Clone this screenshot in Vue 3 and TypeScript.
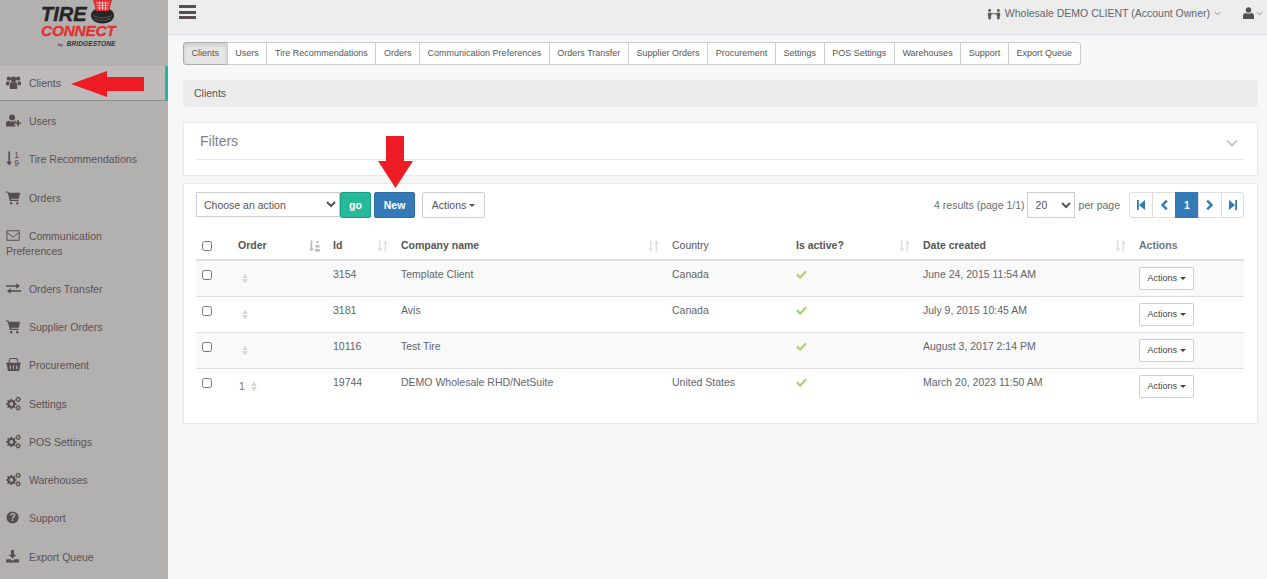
<template>
  <div class="layout">
    <aside class="sidebar">
      <div class="logo">
        <div class="logo-top">
          <span class="logo-tire">TIRE</span>
          <svg class="logo-mark" viewBox="0 0 26 26">
            <ellipse cx="12.500" cy="15.500" rx="11.500" ry="8" fill="#262626" />
            <path d="M4 18.500q8.500 4 17 0M3 15.500q9.500 5 19 0" stroke="#6a6a6a" stroke-width=".7" fill="none" />
            <path d="M3 0h19l-3 11H6z" fill="#dd3236" />
            <path d="M6 3h13M6.500 5.500h12M7 8h11M9.500 1.500V10M12.500 1.500V10M15.500 1.500V10" stroke="#f3d6d6" stroke-width=".8" fill="none" />
          </svg>
        </div>
        <div class="logo-connect">CONNECT</div>
        <div class="logo-by"><small>by</small> BRIDGESTONE</div>
      </div>
      <nav class="side-nav">
        <a v-for="item in sideItems" :key="item.label" class="side-item" :class="{ active: item.label === 'Clients' }">
          <svg class="side-icon" viewBox="0 0 16 16">
            <template v-if="item.icon === 'sort'">
              <path d="M2.500 .5h1.800v11H6.500L3.400 15.500.3 11.500h2.200z" />
              <text x="8.800" y="7" class="tiny">1</text>
              <text x="8.800" y="15.500" class="tiny">9</text>
            </template>
            <template v-else-if="item.icon === 'question'">
              <circle cx="7" cy="8" r="6.500" />
              <text x="7" y="12" class="qmark">?</text>
            </template>
            <path v-else :d="icons[item.icon]" fill-rule="evenodd" />
          </svg>
          {{ item.label }}
        </a>
      </nav>
    </aside>

    <div class="main">
      <header class="topbar">
        <div class="burger"><i></i><i></i><i></i></div>
        <div class="account">
          <svg class="acct-icon" viewBox="0 0 16 12">
            <circle cx="3" cy="2" r="1.600" /><circle cx="13" cy="2" r="1.600" />
            <path d="M1 4.500h4v4H4.500V12h-3V8.500H1zM11 4.500h4v4h-.5V12h-3V8.500H11zM5 5h6v1.200H5z" />
          </svg>
          <span>Wholesale DEMO CLIENT (Account Owner)</span>
          <svg class="chev" viewBox="0 0 8 5"><path d="M.8.8 4 4 7.200.8" /></svg>
        </div>
        <div class="user-menu">
          <svg class="user-icon" viewBox="0 0 12 13">
            <circle cx="6" cy="3.300" r="3" />
            <path d="M0 13v-3q0-3 3-3.500 3 1.500 6 0 3 .5 3 3.500v3z" />
          </svg>
          <svg class="chev" viewBox="0 0 8 5"><path d="M.8.8 4 4 7.200.8" /></svg>
        </div>
      </header>

      <div class="content">
        <div class="tabs">
          <a v-for="tab in tabs" :key="tab" class="tab" :class="{ active: tab === 'Clients' }">{{ tab }}</a>
        </div>

        <div class="crumb">Clients</div>

        <section class="panel filters">
          <div class="filters-head">
            <h2>Filters</h2>
            <svg class="filters-chev" viewBox="0 0 12 8"><path d="M1 1.500 6 6.500l5-5" /></svg>
          </div>
        </section>

        <section class="panel list">
          <div class="toolbar">
            <select class="sel action-sel"><option>Choose an action</option></select>
            <button class="btn go" type="button">go</button>
            <button class="btn new" type="button">New</button>
            <button class="btn plain" type="button">Actions <b class="caret"></b></button>
            <div class="pager-wrap">
              <span>4 results (page 1/1)</span>
              <select class="sel page-sel"><option>20</option></select>
              <span class="per">per page</span>
              <div class="pager">
                <a v-for="p in pager" :key="p.key" :class="{ current: p.key === 'one' }">
                  <template v-if="p.key === 'one'">1</template>
                  <svg v-else viewBox="0 0 10 12"><path :d="p.d" /></svg>
                </a>
              </div>
            </div>
          </div>

          <table class="grid">
            <colgroup>
              <col v-for="w in colWidths" :key="w" :style="{ width: w + 'px' }" />
            </colgroup>
            <thead>
              <tr>
                <th><input type="checkbox" /></th>
                <th v-for="h in headers" :key="h" :class="{ thin: h === 'Country' }">
                  <div class="th-in">
                    {{ h }}
                    <svg v-if="h === 'Order'" class="sort on" viewBox="0 0 11 12">
                      <path d="M1.500 .5h1.800v8H5L2.400 11.500-.2 8.500h1.700zM6 9h5v2.500H6zM6.500 5h4v2.500h-4zM7.500 1h2v2.500h-2z" />
                    </svg>
                    <svg v-else-if="h !== 'Country'" class="sort" viewBox="0 0 11 12">
                      <path d="M2 .5h1.600v8H5.300L2.800 11.500.3 8.500H2zM7.600 11.500h1.600v-8h1.700L8.400.5 5.900 3.500h1.700z" />
                    </svg>
                  </div>
                </th>
                <th>Actions</th>
              </tr>
            </thead>
            <tbody>
              <tr v-for="row in rows" :key="row.id">
                <td><input type="checkbox" /></td>
                <td>
                  <div class="order">
                    <span v-if="row.order">{{ row.order }}</span>
                    <svg class="handle" viewBox="0 0 6 12"><path d="M3 .5 6 5.500H0zM3 11.500 0 6.500h6z" /></svg>
                  </div>
                </td>
                <td>{{ row.id }}</td>
                <td>{{ row.company }}</td>
                <td>{{ row.country }}</td>
                <td>
                  <svg class="tick" viewBox="0 0 12 10"><path d="M0 5.800 1.700 4l2.800 2.700L10.300.5 12 2.300 4.500 10z" /></svg>
                </td>
                <td>{{ row.created }}</td>
                <td><button class="btn plain small" type="button">Actions <b class="caret"></b></button></td>
              </tr>
            </tbody>
          </table>
        </section>
      </div>
    </div>

    <svg class="arrow arrow-left" viewBox="0 0 73 26"><path d="M0 13 36 0v6h37v14H36v6z" /></svg>
    <svg class="arrow arrow-down" viewBox="0 0 35 52"><path d="M8 0h18v25h9L17.500 52 0 25h8z" /></svg>
  </div>
</template>

<script setup lang="ts">
// gear outline with a hole, teeth are just alternating radii
function gear(cx: number, cy: number, r: number, hole: number, teeth = 8): string {
  const pts: string[] = []
  const step = (Math.PI * 2) / (teeth * 4)
  for (let i = 0; i < teeth * 4; i++) {
    const rad = i % 4 < 2 ? r : r * 0.74
    const a = i * step - step / 2
    pts.push(`${(cx + rad * Math.cos(a)).toFixed(2)} ${(cy + rad * Math.sin(a)).toFixed(2)}`)
  }
  const ring = `M${cx - hole} ${cy}a${hole} ${hole} 0 1 0 ${hole * 2} 0a${hole} ${hole} 0 1 0 ${-hole * 2} 0z`
  return `M${pts.join('L')}z${ring}`
}

const cogs = gear(5.7, 8.5, 5.7, 2) + gear(13, 3.6, 3, 1.2, 6) + gear(13, 12.6, 3, 1.2, 6)
const cart = 'M0 1.500h2.600l.5 1.500H15l-1.300 6.200H5l.3 1.300h8.200v1.300H4L2 2.800H0zM5.500 12.800a1.300 1.300 0 1 1 0 2.600 1.300 1.300 0 0 1 0-2.600zM12 12.800a1.300 1.300 0 1 1 0 2.600 1.300 1.300 0 0 1 0-2.600z'

const icons: Record<string, string> = {
  users: 'M8 1.500a3 3 0 1 1 0 6 3 3 0 0 1 0-6zM3 1.500a2.300 2.300 0 1 1 0 4.600 2.300 2.300 0 0 1 0-4.600zM13 1.500a2.300 2.300 0 1 1 0 4.600 2.300 2.300 0 0 1 0-4.600zM4 15v-4.500q0-3 2.200-3 1.800 1 3.600 0 2.200 0 2.200 3V15zM0 11V8.800q0-2.200 1.700-2.200 1.300.8 2.800.4-1.500 1-1.500 4zM16 11V8.800q0-2.200-1.700-2.200-1.300.8-2.800.4 1.500 1 1.500 4z',
  userPlus: 'M6.500 1.500a3.200 3.200 0 1 1 0 6.400 3.200 3.200 0 0 1 0-6.400zM0 14.500V11.500Q0 8.500 3 8.300q3.500 2 7 0 1 0 1.800.7H10v2h-1v2h1v1.500zM12 7.500h1.800v2.500h2.200v1.700h-2.200v2.300H12v-2.300H9.900V10H12z',
  cart,
  envelope: 'M.5 2.500h14v11H.5zM1.500 3.500v1l6 4.700 6-4.700v-1zM13.500 5.700l-6 4.800-6-4.800v6.800h12z',
  exchange: 'M0 4.500h11V2.300L15 5.300l-4 3V6H0zM16 9.800H5V7.700L1 10.700l4 3v-2.300h11z',
  basket: 'M0 6h16v1.500h-.8L14 15H2L.8 7.500H0zM4 9v4h1.200V9zM7.400 9v4h1.200V9zM10.800 9v4H12V9zM2.500 6l1-4q.3-1 1.300-1h6.400q1 0 1.300 1l1 4h-1.200l-1-3.800H4.700L3.700 6z',
  cogs,
  download: 'M5.500 1h3v5h2.600L7 10 2.900 6h2.600zM0 11h4.800L7 12.800 9.200 11H14v3.500H0z',
}

type SideItem = { label: string; icon: string }

const sideItems: SideItem[] = [
  { label: 'Clients', icon: 'users' },
  { label: 'Users', icon: 'userPlus' },
  { label: 'Tire Recommendations', icon: 'sort' },
  { label: 'Orders', icon: 'cart' },
  { label: 'Communication Preferences', icon: 'envelope' },
  { label: 'Orders Transfer', icon: 'exchange' },
  { label: 'Supplier Orders', icon: 'cart' },
  { label: 'Procurement', icon: 'basket' },
  { label: 'Settings', icon: 'cogs' },
  { label: 'POS Settings', icon: 'cogs' },
  { label: 'Warehouses', icon: 'cogs' },
  { label: 'Support', icon: 'question' },
  { label: 'Export Queue', icon: 'download' },
]

const tabs = [
  'Clients', 'Users', 'Tire Recommendations', 'Orders', 'Communication Preferences',
  'Orders Transfer', 'Supplier Orders', 'Procurement', 'Settings', 'POS Settings',
  'Warehouses', 'Support', 'Export Queue',
]

const pager = [
  { key: 'first', d: 'M1 1h1.800v10H1zM9 1v10L3 6z' },
  { key: 'prev', d: 'M7 .8 8.700 2.500 5.200 6l3.500 3.500L7 11.200 1.800 6z' },
  { key: 'one', d: '' },
  { key: 'next', d: 'M3 .8 1.300 2.500 4.800 6 1.300 9.500 3 11.200 8.200 6z' },
  { key: 'last', d: 'M9 1H7.200v10H9zM1 1v10l6-5z' },
]

const colWidths = [34, 95, 68, 271, 124, 127, 216, 113]
const headers = ['Order', 'Id', 'Company name', 'Country', 'Is active?', 'Date created']

const rows = [
  { id: 3154, order: '', company: 'Template Client', country: 'Canada', created: 'June 24, 2015 11:54 AM' },
  { id: 3181, order: '', company: 'Avis', country: 'Canada', created: 'July 9, 2015 10:45 AM' },
  { id: 10116, order: '', company: 'Test Tire', country: '', created: 'August 3, 2017 2:14 PM' },
  { id: 19744, order: '1', company: 'DEMO Wholesale RHD/NetSuite', country: 'United States', created: 'March 20, 2023 11:50 AM' },
]
</script>

<style>
html, body { margin: 0; height: 100%; overflow: hidden; }
</style>

<style scoped>
.layout {
  position: relative;
  display: flex;
  height: 579px;
  overflow: hidden;
  font-family: "Liberation Sans", Arial, sans-serif;
  font-size: 10.5px;
  line-height: 15px;
  color: #5f656c;
  background: #f7f7f7;
}

.sidebar {
  flex: 0 0 168px;
  background: #b3b1af;
  color: #5a5058;
}

.logo {
  height: 66px;
  box-sizing: border-box;
  padding-left: 41px;
  font-weight: 700;
  font-style: italic;
  overflow: hidden;
}
.logo-top { display: flex; height: 24px; align-items: flex-start; }
.logo-tire {
  margin-top: 4px;
  font-size: 20px;
  line-height: 20px;
  color: #262626;
  -webkit-text-stroke: 0.4px #262626;
}
.logo-mark { width: 26px; height: 26px; margin-left: 3px; flex: none; }
.logo-connect {
  position: relative;
  font-size: 15.5px;
  line-height: 13px;
  letter-spacing: -0.3px;
  color: #e1302f;
  -webkit-text-stroke: 0.3px #e1302f;
}
.logo-by {
  margin: 2px 0 0 17px;
  font-size: 6.5px;
  line-height: 9px;
  letter-spacing: 0.1px;
  color: #333;
}
.logo-by small { font-size: 4px; font-style: normal; margin-right: 2px; }

.side-nav { display: flex; flex-direction: column; }
.side-item {
  display: block;
  padding: 11.620px 20px 11.620px 6px;
}
.side-item.active {
  padding: 10px 6px 9px 6px;
  margin-bottom: 1.500px;
  background: #bdbab9;
  border-right: 3px solid #1abb9c;
  border-bottom: 1px solid #8f8d8c;
}
.side-icon {
  width: 15px;
  height: 15px;
  margin: -4px 5px -4px 0;
  vertical-align: 1px;
  fill: #574c4f;
  overflow: visible;
}
.tiny { font-size: 9px; font-family: "Liberation Sans", sans-serif; }
.qmark { font-size: 11px; font-weight: 700; text-anchor: middle; fill: #b3b1af; font-family: "Liberation Sans", sans-serif; }

.main { flex: 1; min-width: 0; display: flex; flex-direction: column; }

.topbar {
  flex: 0 0 35px;
  box-sizing: border-box;
  display: flex;
  align-items: flex-start;
  background: #ededed;
  border-bottom: 1px solid #d9dee4;
}
.burger {
  display: flex;
  flex-direction: column;
  gap: 2.500px;
  margin: 5px 0 0 11px;
  width: 17px;
}
.burger i { display: block; height: 3px; background: #5a4e4e; }

.account {
  margin: 6px 0 0 auto;
  display: flex;
  align-items: center;
  gap: 4px;
  color: #5f6670;
}
.acct-icon { width: 14px; height: 12px; fill: #5a5a5f; }
.chev { width: 7px; height: 5px; fill: none; stroke: #7a8490; stroke-width: 1; }
.user-menu {
  display: flex;
  align-items: center;
  gap: 2px;
  margin: 7px 4px 0 22px;
}
.user-icon { width: 11px; height: 12px; fill: #5a4e4e; }

.content {
  flex: 1;
  padding: 7px 9px 0 15px;
  display: flex;
  flex-direction: column;
}

.tabs { display: flex; align-items: stretch; height: 23px; }
.tab {
  display: flex;
  align-items: center;
  padding: 0 7.600px;
  font-size: 9px;
  color: #555;
  background: #fff;
  border: 1px solid #ccc;
  margin-left: -1px;
}
.tab:first-child { margin-left: 0; border-radius: 3px 0 0 3px; }
.tab:last-child { border-radius: 0 3px 3px 0; }
.tab.active {
  background: #e6e6e6;
  border-color: #adadad;
  box-shadow: inset 0 2px 4px rgba(0, 0, 0, 0.125);
}

.crumb {
  margin-top: 15px;
  height: 27px;
  padding: 0 11px;
  display: flex;
  align-items: center;
  background: #ececec;
  border-radius: 4px;
  color: #555;
}

.panel {
  background: #fff;
  border: 1px solid #e6e9ed;
  box-sizing: border-box;
  padding: 0 13px 0 12px;
}
.filters { margin-top: 15px; height: 54px; }
.filters-head {
  height: 36px;
  display: flex;
  align-items: center;
  justify-content: space-between;
  border-bottom: 1px solid #e6e9ed;
}
.filters-head h2 {
  margin: 0 0 0 4px;
  font-size: 14px;
  font-weight: 400;
  color: #7a8288;
}
.filters-chev {
  width: 12px;
  height: 8px;
  margin: 3px 6px 0 0;
  fill: none;
  stroke: #c5c7cb;
  stroke-width: 2;
}

.list { margin-top: 7px; height: 241px; padding-top: 8px; }

.toolbar { display: flex; align-items: flex-start; height: 26px; }
.sel {
  box-sizing: border-box;
  height: 25px;
  font: inherit;
  color: #555;
  background: #fff;
  border: 1px solid #ccc;
  padding: 0 3px;
  border-radius: 0;
}
.action-sel { width: 144px; }
.page-sel { width: 48px; height: 26px; margin: 0 4px 0 2px; padding: 0 4px; }

.btn {
  box-sizing: border-box;
  height: 26px;
  font: inherit;
  border: 1px solid transparent;
  border-radius: 2px;
  cursor: pointer;
  padding: 0;
}
.go { width: 31px; background: #26b99a; border-color: #169f85; color: #fff; font-weight: 700; }
.new { width: 41px; margin-left: 3px; background: #337ab7; border-color: #2e6da4; color: #fff; font-weight: 700; }
.plain { width: 63px; margin-left: 7px; background: #fff; border-color: #ccc; color: #555; }
.plain.small { display: block; width: 55px; height: 23px; margin: 0; font-size: 9px; color: #444; }
.caret {
  display: inline-block;
  width: 0;
  height: 0;
  vertical-align: middle;
  border-top: 3px solid;
  border-left: 3px solid transparent;
  border-right: 3px solid transparent;
}

.pager-wrap { margin-left: auto; display: flex; align-items: center; height: 26px; color: #666d75; }
.per { margin-right: 9px; }
.pager { display: flex; height: 26px; }
.pager a {
  box-sizing: border-box;
  width: 24px;
  margin-left: -1px;
  display: flex;
  align-items: center;
  justify-content: center;
  border: 1px solid #ddd;
  background: #fff;
  font-weight: 700;
}
.pager a:first-child { margin-left: 0; border-radius: 3px 0 0 3px; }
.pager a:last-child { width: 23px; border-radius: 0 3px 3px 0; }
.pager a.current { background: #337ab7; border-color: #337ab7; color: #fff; }
.pager svg { width: 10px; height: 12px; fill: #337ab7; }

.grid {
  width: 1048px;
  margin-top: 14px;
  table-layout: fixed;
  border-collapse: collapse;
}
.grid th {
  height: 27px;
  padding: 0 5px 0 6px;
  text-align: left;
  color: #555;
  font-weight: 700;
  border-bottom: 2px solid #ddd;
}
.grid th.thin { font-weight: 400; }
.grid th:last-child { padding-left: 8px; color: #6b7683; }
.th-in { display: flex; align-items: center; justify-content: space-between; padding-left: 2px; }
.sort { width: 11px; height: 12px; fill: #dedede; }
.sort.on { fill: #bdbdbd; }

.grid td {
  box-sizing: border-box;
  height: 36px;
  padding: 6px 8px 0 8px;
  vertical-align: top;
  border-bottom: 1px solid #ddd;
}
.grid tbody tr:last-child td { border-bottom: 0; }
.grid tbody tr:nth-child(odd) td { background: #f9f9f9; }
.grid input { width: 10px; height: 10px; margin: 0; vertical-align: middle; }
.grid td input { margin: 3px 0 0 -2px; display: block; }

.order { display: flex; align-items: center; gap: 3px; height: 15px; margin-top: 4px; padding-left: 1px; color: #6a7580; }
.handle { width: 6px; height: 11px; margin-left: 3px; fill: #d6d6d6; }
.tick { display: block; width: 11px; height: 9px; fill: #a3d56b; margin-top: 3px; }

.arrow { position: absolute; fill: #ed1c24; }
.arrow-left { left: 71px; top: 71px; width: 73px; height: 26px; }
.arrow-down { left: 378px; top: 136px; width: 35px; height: 52px; }
</style>
